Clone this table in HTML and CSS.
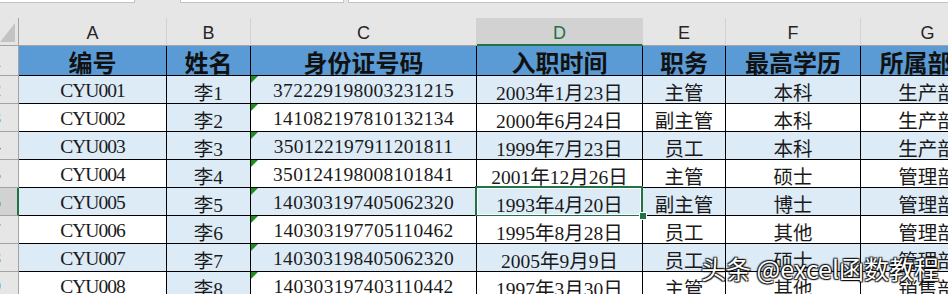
FILE: index.html
```html
<!DOCTYPE html>
<html lang="zh-CN">
<head>
<meta charset="utf-8">
<title>员工信息表</title>
<link rel="stylesheet" href="styles.css">
</head>
<body>
<div class="app">
  <div class="strip">
    <div class="box box-name"></div>
    <div class="box box-mid"></div>
    <div class="box box-formula"></div>
  </div>
  <div class="sheet">
    <div class="row">
      <div class="corner"><div class="corner-tri"></div></div>
      <div class="ch">A</div>
      <div class="ch">B</div>
      <div class="ch">C</div>
      <div class="ch ch-active">D</div>
      <div class="ch">E</div>
      <div class="ch">F</div>
      <div class="ch">G</div>
    </div>
    <div class="row">
      <div class="rh"><span>1</span></div>
      <div class="cell th">编号</div>
      <div class="cell th">姓名</div>
      <div class="cell th">身份证号码</div>
      <div class="cell th">入职时间</div>
      <div class="cell th">职务</div>
      <div class="cell th">最高学历</div>
      <div class="cell th">所属部门</div>
    </div>
    <div class="row alt">
      <div class="rh"><span>2</span></div>
      <div class="cell ca">CYU001</div>
      <div class="cell cb">李1</div>
      <div class="cell cc">372229198003231215</div>
      <div class="cell">2003年1月23日</div>
      <div class="cell">主管</div>
      <div class="cell">本科</div>
      <div class="cell">生产部</div>
    </div>
    <div class="row">
      <div class="rh"><span>3</span></div>
      <div class="cell ca">CYU002</div>
      <div class="cell cb">李2</div>
      <div class="cell cc">141082197810132134</div>
      <div class="cell">2000年6月24日</div>
      <div class="cell">副主管</div>
      <div class="cell">本科</div>
      <div class="cell">生产部</div>
    </div>
    <div class="row alt">
      <div class="rh"><span>4</span></div>
      <div class="cell ca">CYU003</div>
      <div class="cell cb">李3</div>
      <div class="cell cc">350122197911201811</div>
      <div class="cell">1999年7月23日</div>
      <div class="cell">员工</div>
      <div class="cell">本科</div>
      <div class="cell">生产部</div>
    </div>
    <div class="row">
      <div class="rh"><span>5</span></div>
      <div class="cell ca">CYU004</div>
      <div class="cell cb">李4</div>
      <div class="cell cc">350124198008101841</div>
      <div class="cell">2001年12月26日</div>
      <div class="cell">主管</div>
      <div class="cell">硕士</div>
      <div class="cell">管理部</div>
    </div>
    <div class="row alt">
      <div class="rh rh-active"><span>6</span></div>
      <div class="cell ca">CYU005</div>
      <div class="cell cb">李5</div>
      <div class="cell cc">140303197405062320</div>
      <div class="cell selected">1993年4月20日<span class="fill-handle"></span></div>
      <div class="cell">副主管</div>
      <div class="cell">博士</div>
      <div class="cell">管理部</div>
    </div>
    <div class="row">
      <div class="rh"><span>7</span></div>
      <div class="cell ca">CYU006</div>
      <div class="cell cb">李6</div>
      <div class="cell cc">140303197705110462</div>
      <div class="cell">1995年8月28日</div>
      <div class="cell">员工</div>
      <div class="cell">其他</div>
      <div class="cell">管理部</div>
    </div>
    <div class="row alt">
      <div class="rh"><span>8</span></div>
      <div class="cell ca">CYU007</div>
      <div class="cell cb">李7</div>
      <div class="cell cc">140303198405062320</div>
      <div class="cell">2005年9月9日</div>
      <div class="cell">员工</div>
      <div class="cell">硕士</div>
      <div class="cell">管理部</div>
    </div>
    <div class="row">
      <div class="rh"><span>9</span></div>
      <div class="cell ca">CYU008</div>
      <div class="cell cb">李8</div>
      <div class="cell cc">140303197403110442</div>
      <div class="cell">1997年3月30日</div>
      <div class="cell">主管</div>
      <div class="cell">其他</div>
      <div class="cell">销售部</div>
    </div>
  </div>
  <div class="watermark">头条 @excel函数教程</div>
</div>
</body>
</html>
```
FILE: styles.css
```css
html, body {
  margin: 0;
  padding: 0;
  overflow: hidden;
  background: #e6e6e6;
}

body {
  font-family: "Liberation Serif", "Noto Sans CJK SC", serif;
}

.app {
  position: relative;
  width: 948px;
  height: 294px;
  overflow: hidden;
}

/* formula bar remnants */
.strip {
  display: flex;
  align-items: flex-start;
  height: 18px;
  background: #e6e6e6;
}

.box {
  box-sizing: border-box;
  height: 3px;
  background: #fff;
  border: 1px solid #c4c4c4;
  border-top: 0;
}

.box-name {
  width: 135px;
  border-left: 0;
  margin-right: 45px;
}

.box-mid {
  width: 164px;
  margin-right: 4px;
}

.box-formula {
  flex: 1;
  border-right: 0;
}

/* grid */
.sheet {
  display: grid;
  grid-template-columns: 19px 148px 84px 226px 166px 83px 135px 134px;
  grid-template-rows: 28px 30px repeat(8, 28px);
  width: 995px;
  background: #fff;
}

.row {
  display: contents;
}

.corner {
  box-sizing: border-box;
  background: #e6e6e6;
  border-right: 1px solid #a3a3a3;
  border-bottom: 1px solid #a3a3a3;
  display: flex;
  justify-content: flex-end;
  align-items: flex-end;
  padding: 0 3px 3px 0;
}

.corner-tri {
  width: 15px;
  height: 19px;
  background: #c3c3c3;
  clip-path: polygon(100% 0, 100% 100%, 0 100%);
}

.ch {
  box-sizing: border-box;
  background: #e6e6e6;
  border-right: 1px solid #d2d2d2;
  border-bottom: 1px solid #a3a3a3;
  display: flex;
  align-items: center;
  justify-content: center;
  padding-top: 4px;
  font-family: "Liberation Sans", Arial, sans-serif;
  font-size: 18px;
  color: #262626;
}

.ch-active {
  background: #d2d2d2;
  border-bottom: 2px solid #217346;
  color: #217346;
  padding-top: 5px;
}

.rh {
  box-sizing: border-box;
  background: #e6e6e6;
  border-right: 1px solid #a3a3a3;
  border-bottom: 1px solid #a3a3a3;
  display: flex;
  align-items: center;
  justify-content: flex-end;
  padding-right: 17px;
  padding-top: 3px;
  overflow: hidden;
  font-family: "Liberation Sans", Arial, sans-serif;
  font-size: 17px;
  color: #2b2b6b;
}

.rh-active {
  background: #d2d2d2;
  border-right: 2px solid #217346;
  padding-right: 16px;
}

.cell {
  position: relative;
  box-sizing: border-box;
  border-right: 1px solid #000;
  border-bottom: 1px solid #000;
  display: flex;
  align-items: center;
  justify-content: center;
  padding-top: 3px;
  font-size: 19.5px;
  color: #1a1a1a;
  white-space: nowrap;
  background: #fff;
}

.alt > .cell,
.cell.cb {
  background: #ddebf7;
}

.th {
  background: #5b9bd5;
  font-size: 24px;
  font-weight: bold;
  color: #111;
  padding-top: 2px;
}

.row > .th {
  background: #5b9bd5;
}

.ca {
  letter-spacing: -1px;
}

.cc {
  letter-spacing: 0.3px;
}

/* number-stored-as-text indicator */
.cc::before {
  content: "";
  position: absolute;
  left: 0;
  top: 0;
  width: 7px;
  height: 7px;
  background: #1e8e1e;
  clip-path: polygon(0 0, 100% 0, 0 100%);
}

/* active cell */
.selected::after {
  content: "";
  position: absolute;
  left: -2px;
  top: -2px;
  right: -1px;
  bottom: -2px;
  border: 2px solid #217346;
  box-shadow: inset 0 0 0 1px #fff;
  pointer-events: none;
}

.fill-handle {
  position: absolute;
  right: -5px;
  bottom: -5px;
  width: 6px;
  height: 6px;
  background: #217346;
  border: 1px solid #fff;
  z-index: 2;
}

/* watermark overlay */
.watermark {
  position: absolute;
  left: 701px;
  top: 254px;
  font-family: "Noto Sans CJK SC", "Noto Sans", sans-serif;
  font-size: 25px;
  line-height: 28px;
  color: #fff;
  white-space: nowrap;
  text-shadow:
    1px 1px 1px rgba(0, 0, 0, 0.9),
    -1px -1px 1px rgba(0, 0, 0, 0.75),
    1px -1px 1px rgba(0, 0, 0, 0.75),
    -1px 1px 1px rgba(0, 0, 0, 0.75),
    0 0 2px rgba(0, 0, 0, 0.6);
  z-index: 5;
}
```
